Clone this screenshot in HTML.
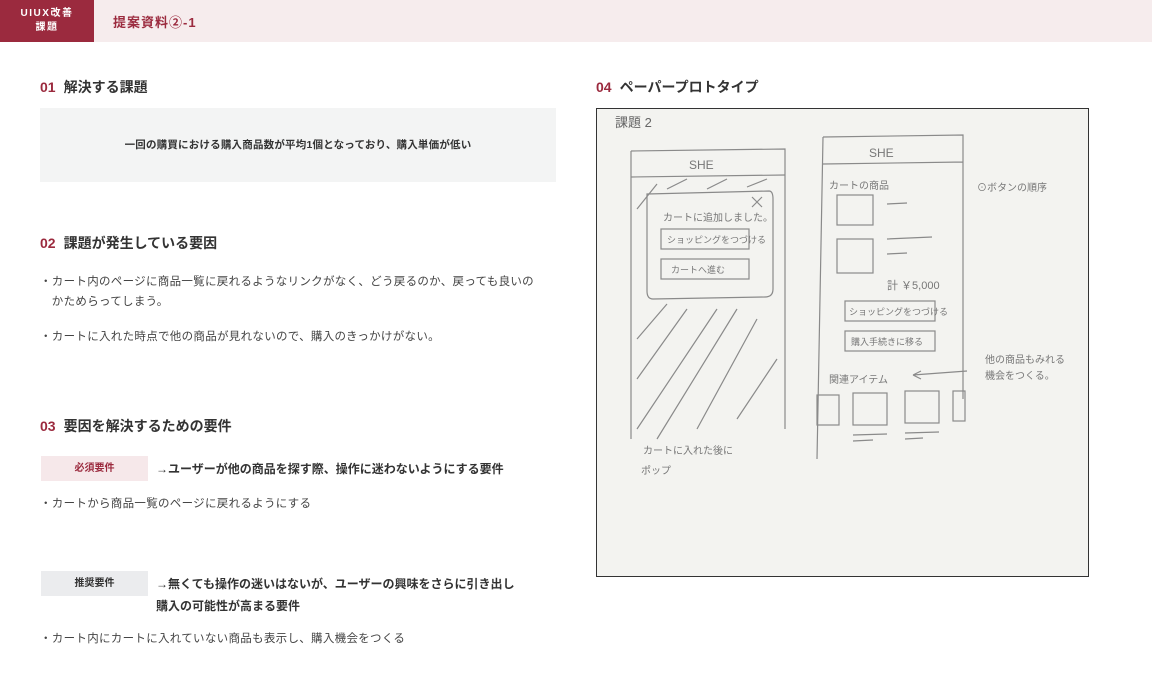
<!DOCTYPE html>
<html><head><meta charset="utf-8"><style>
*{margin:0;padding:0;box-sizing:border-box}
body{width:1152px;height:700px;background:#fff;font-family:"Liberation Sans","Noto Sans CJK JP",sans-serif;color:#333;position:relative;overflow:hidden}
.hd{position:absolute;left:0;top:0;width:1152px;height:42px;background:#f6eced}
.logo{position:absolute;left:0;top:0;width:94px;height:42px;background:#9b2a3e;color:#fff;font-size:10px;font-weight:bold;text-align:center;line-height:14px;padding-top:7px;letter-spacing:1.5px}
.ttl{position:absolute;left:113px;top:12px;font-size:13px;font-weight:bold;color:#9b2a3e;letter-spacing:1px}
.h{position:absolute;font-size:14px;font-weight:bold;color:#333;letter-spacing:0}
.h b{color:#9b2a3e;margin-right:8px}
.t{position:absolute;font-size:11.5px;color:#444;letter-spacing:.3px;line-height:20px}
.box{position:absolute;left:40px;top:108px;width:516px;height:74px;background:#f3f4f4;font-size:10.5px;font-weight:bold;text-align:center;line-height:74px;letter-spacing:.2px}
.tag{position:absolute;left:41px;width:107px;height:25px;font-size:10px;font-weight:bold;text-align:center;line-height:25px}
.bt{position:absolute;left:156px;font-size:12px;font-weight:bold;letter-spacing:0;line-height:22px;color:#333}
.img{position:absolute;left:596px;top:108px;width:493px;height:469px;border:1px solid #333;background:#f3f3f0}
</style></head><body>
<div class="hd"></div>
<div class="logo">UIUX改善<br>課題</div>
<div class="ttl">提案資料②-1</div>

<div class="h" style="left:40px;top:77px"><b>01</b>解決する課題</div>
<div class="box">一回の購買における購入商品数が平均1個となっており、購入単価が低い</div>

<div class="h" style="left:40px;top:233px"><b>02</b>課題が発生している要因</div>
<div class="t" style="left:40px;top:272px">・カート内のページに商品一覧に戻れるようなリンクがなく、どう戻るのか、戻っても良いの<br>　かためらってしまう。</div>
<div class="t" style="left:40px;top:327px">・カートに入れた時点で他の商品が見れないので、購入のきっかけがない。</div>

<div class="h" style="left:40px;top:416px"><b>03</b>要因を解決するための要件</div>
<div class="tag" style="top:456px;background:#f6e8ea;color:#9b2a3e;line-height:26px">必須要件</div>
<div class="bt" style="top:458px">→ユーザーが他の商品を探す際、操作に迷わないようにする要件</div>
<div class="t" style="left:40px;top:494px">・カートから商品一覧のページに戻れるようにする</div>
<div class="tag" style="top:571px;background:#ebecee;color:#333;line-height:26px">推奨要件</div>
<div class="bt" style="top:573px">→無くても操作の迷いはないが、ユーザーの興味をさらに引き出し<br>購入の可能性が高まる要件</div>
<div class="t" style="left:40px;top:629px">・カート内にカートに入れていない商品も表示し、購入機会をつくる</div>

<div class="h" style="left:596px;top:77px"><b>04</b>ペーパープロトタイプ</div>
<div class="img">
<svg width="491" height="467" viewBox="0 0 491 467" fill="none" stroke="#8a8a8a" stroke-width="1.2" font-family="Liberation Sans,Noto Sans CJK JP,sans-serif">
<text x="18" y="18" font-size="13" fill="#666" stroke="none">課題 2</text>
<path d="M34 42 L188 40 L188 320 M34 42 L34 330"/>
<path d="M34 68 L188 66"/>
<text x="92" y="60" font-size="12" fill="#777" stroke="none">SHE</text>
<path d="M50 85 L172 82 Q176 82 176 90 L176 180 Q176 188 168 188 L56 190 Q50 190 50 182 Z"/>
<path d="M155 88 l10 10 m0 -10 l-10 10"/>
<text x="66" y="112" font-size="10" fill="#777" stroke="none">カートに追加しました。</text>
<rect x="64" y="120" width="88" height="20"/><text x="70" y="134" font-size="9" fill="#777" stroke="none">ショッピングをつづける</text>
<rect x="64" y="150" width="88" height="20"/><text x="74" y="164" font-size="9" fill="#777" stroke="none">カートへ進む</text>
<path d="M40 230 L70 195 M40 270 L90 200 M40 320 L120 200 M60 330 L140 200 M100 320 L160 210 M140 310 L180 250 M40 100 L60 75 M70 80 L90 70 M110 80 L130 70 M150 78 L170 70"/>
<text x="46" y="345" font-size="10" fill="#777" stroke="none">カートに入れた後に</text>
<text x="44" y="365" font-size="10" fill="#777" stroke="none">ポップ</text>
<path d="M226 28 L366 26 L366 290 M226 28 L220 350 M226 55 L366 53"/>
<text x="272" y="48" font-size="12" fill="#777" stroke="none">SHE</text>
<text x="232" y="80" font-size="10" fill="#777" stroke="none">カートの商品</text>
<rect x="240" y="86" width="36" height="30"/><path d="M290 95 L310 94"/>
<rect x="240" y="130" width="36" height="34"/><path d="M290 130 L335 128 M290 145 L310 144"/>
<text x="290" y="180" font-size="11" fill="#777" stroke="none">計 ￥5,000</text>
<rect x="248" y="192" width="90" height="20"/><text x="252" y="206" font-size="9" fill="#777" stroke="none">ショッピングをつづける</text>
<rect x="248" y="222" width="90" height="20"/><text x="254" y="236" font-size="9" fill="#777" stroke="none">購入手続きに移る</text>
<text x="232" y="274" font-size="10" fill="#777" stroke="none">関連アイテム</text>
<path d="M316 266 L370 262 M316 266 l8 -4 m-8 4 l8 4"/>
<text x="388" y="254" font-size="10" fill="#777" stroke="none">他の商品もみれる</text>
<text x="388" y="270" font-size="10" fill="#777" stroke="none">機会をつくる。</text>
<text x="380" y="82" font-size="10" fill="#777" stroke="none">⊙ボタンの順序</text>
<rect x="220" y="286" width="22" height="30"/><rect x="256" y="284" width="34" height="32"/><rect x="308" y="282" width="34" height="32"/><rect x="356" y="282" width="12" height="30"/>
<path d="M256 326 L290 325 M256 332 L276 331 M308 324 L342 323 M308 330 L326 329"/>
</svg>
</div>
</body></html>
